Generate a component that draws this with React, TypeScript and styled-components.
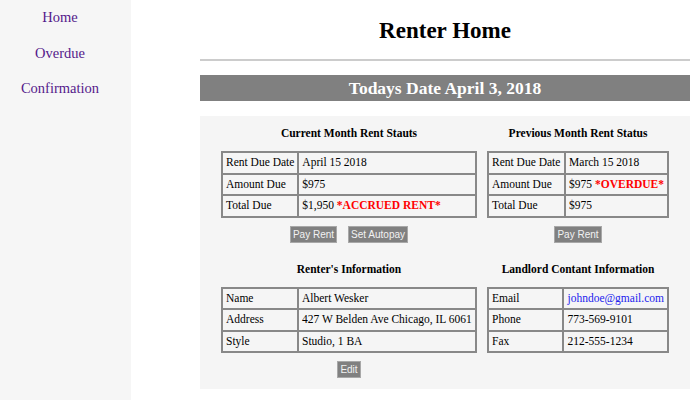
import styled, { createGlobalStyle } from 'styled-components';

const GlobalStyle = createGlobalStyle`
  html, body {
    margin: 0;
    padding: 0;
    background: #fff;
    font-family: "Liberation Serif", "Times New Roman", serif;
    color: #000;
  }
`;

type Row = { label: string; value: string; note?: string; link?: boolean };

const currentRows: Row[] = [
  { label: 'Rent Due Date', value: 'April 15 2018' },
  { label: 'Amount Due', value: '$975' },
  { label: 'Total Due', value: '$1,950', note: '*ACCRUED RENT*' }
];

const previousRows: Row[] = [
  { label: 'Rent Due Date', value: 'March 15 2018' },
  { label: 'Amount Due', value: '$975', note: '*OVERDUE*' },
  { label: 'Total Due', value: '$975' }
];

const renterRows: Row[] = [
  { label: 'Name', value: 'Albert Wesker' },
  { label: 'Address', value: '427 W Belden Ave Chicago, IL 6061' },
  { label: 'Style', value: 'Studio, 1 BA' }
];

const landlordRows: Row[] = [
  { label: 'Email', value: 'johndoe@gmail.com', link: true },
  { label: 'Phone', value: '773-569-9101' },
  { label: 'Fax', value: '212-555-1234' }
];

const InfoTable = ({ rows, labelWidth }: { rows: Row[]; labelWidth: number }) => (
  <Table>
    <tbody>
      {rows.map((row) => (
        <tr key={row.label}>
          <LabelCell $width={labelWidth}>{row.label}</LabelCell>
          <Cell>
            {row.link ? <MailLink href="#">{row.value}</MailLink> : row.value}
            {row.note && <Alert> {row.note}</Alert>}
          </Cell>
        </tr>
      ))}
    </tbody>
  </Table>
);

const App = () => {
  return (
    <Wrapper>
      <GlobalStyle />
      <Sidebar>
        <NavLink href="#">Home</NavLink>
        <NavLink href="#">Overdue</NavLink>
        <NavLink href="#">Confirmation</NavLink>
      </Sidebar>
      <Main>
        <Title>Renter Home</Title>
        <Divider />
        <DateBar>Todays Date April 3, 2018</DateBar>
        <Panel>
          <Section>
            <Heading>Current Month Rent Stauts</Heading>
            <InfoTable rows={currentRows} labelWidth={68} />
            <Buttons>
              <Button>Pay Rent</Button>
              <Button>Set Autopay</Button>
            </Buttons>
          </Section>
          <Section>
            <Heading>Previous Month Rent Status</Heading>
            <InfoTable rows={previousRows} labelWidth={70} />
            <Buttons>
              <Button>Pay Rent</Button>
            </Buttons>
          </Section>
          <Section>
            <Heading $top={18}>Renter's Information</Heading>
            <InfoTable rows={renterRows} labelWidth={68} />
            <Buttons>
              <Button>Edit</Button>
            </Buttons>
          </Section>
          <Section>
            <Heading $top={18}>Landlord Contant Information</Heading>
            <InfoTable rows={landlordRows} labelWidth={70} />
          </Section>
        </Panel>
      </Main>
    </Wrapper>
  );
};

export default App;

const Wrapper = styled.div`
  display: flex;
  min-height: 100vh;
`;

const Sidebar = styled.nav`
  width: 120px;
  flex-shrink: 0;
  padding: 8px 11px 0 0;
  background-color: #f6f6f6;
  display: flex;
  flex-direction: column;
  align-items: center;
  gap: 17.5px;
`;

const NavLink = styled.a`
  font-size: 14.5px;
  line-height: 18px;
  color: #551a8b;
  text-decoration: none;
`;

const Main = styled.main`
  flex: 1;
  padding: 0 10px 0 69px;
`;

const Title = styled.h1`
  margin: 16px 0 13px;
  font-size: 23px;
  line-height: 30px;
  text-align: center;
`;

const Divider = styled.hr`
  margin: 0;
  height: 0;
  border: none;
  border-top: 2px solid #cccccc;
`;

const DateBar = styled.h2`
  margin: 14px 0 0;
  height: 26px;
  line-height: 26px;
  background-color: #808080;
  color: #fff;
  font-size: 17.5px;
  text-align: center;
`;

const Panel = styled.div`
  margin-top: 15px;
  background-color: #f5f5f5;
  display: grid;
  grid-template-columns: 256px 182px;
  justify-content: center;
  align-items: start;
  column-gap: 10px;
  padding: 0 0 11px;
`;

const Section = styled.section`
  display: flex;
  flex-direction: column;
  align-items: center;
`;

const Heading = styled.h3<{ $top?: number }>`
  margin: ${({ $top }) => $top ?? 9}px 0 10px;
  font-size: 11.5px;
  line-height: 16px;
  text-align: center;
`;

const Table = styled.table`
  width: 100%;
  border-collapse: collapse;
  border: 2px solid #888;
  font-size: 11.5px;
`;

const Cell = styled.td`
  border: 2px solid #888;
  padding: 0 3px;
  height: 19.5px;
  line-height: 19.5px;
  white-space: nowrap;
`;

const LabelCell = styled(Cell)<{ $width: number }>`
  width: ${({ $width }) => $width}px;
`;

const Alert = styled.span`
  color: #ff0000;
  font-weight: bold;
`;

const MailLink = styled.a`
  color: #2222ee;
  text-decoration: none;
`;

const Buttons = styled.div`
  display: flex;
  justify-content: center;
  gap: 11px;
  margin-top: 8px;
`;

const Button = styled.button`
  height: 17px;
  padding: 0 2px;
  background-color: #808080;
  border: 1px solid #a8a8a8;
  color: #f2f2f2;
  font-family: "Liberation Sans", Arial, sans-serif;
  font-size: 10px;
  line-height: 15px;
  cursor: pointer;
`;
